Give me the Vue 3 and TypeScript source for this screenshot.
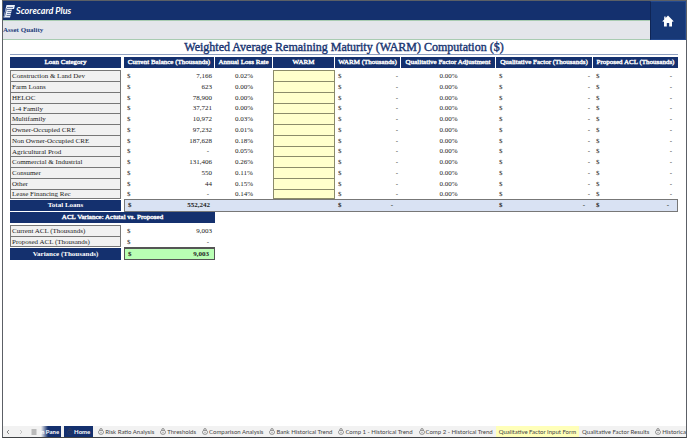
<script setup lang="ts">
import { ref } from 'vue'

interface LoanRow {
  category: string
  balance: string
  lossRate: string
}

interface SheetTab {
  label: string
  locked: boolean
  kind?: 'active' | 'input' | 'pane'
}

const headings: string[] = [
  'Current Balance (Thousands)',
  'Annual Loss Rate',
  'WARM',
  'WARM (Thousands)',
  'Qualitative Factor Adjustment',
  'Qualitative Factor (Thousands)',
  'Proposed ACL (Thousands)',
]

const loans: LoanRow[] = [
  { category: 'Construction & Land Dev', balance: '7,166', lossRate: '0.02%' },
  { category: 'Farm Loans', balance: '623', lossRate: '0.00%' },
  { category: 'HELOC', balance: '78,900', lossRate: '0.00%' },
  { category: '1-4 Family', balance: '37,721', lossRate: '0.00%' },
  { category: 'Multifamily', balance: '10,972', lossRate: '0.03%' },
  { category: 'Owner-Occupied CRE', balance: '97,232', lossRate: '0.01%' },
  { category: 'Non Owner-Occupied CRE', balance: '187,628', lossRate: '0.18%' },
  { category: 'Agricultural Prod', balance: '-', lossRate: '0.05%' },
  { category: 'Commercial & Industrial', balance: '131,406', lossRate: '0.26%' },
  { category: 'Consumer', balance: '550', lossRate: '0.11%' },
  { category: 'Other', balance: '44', lossRate: '0.15%' },
  { category: 'Lease Financing Rec', balance: '-', lossRate: '0.14%' },
]

const warm = ref<string[]>(loans.map(() => ''))

const tabs: SheetTab[] = [
  { label: 'n Pane', locked: false, kind: 'pane' },
  { label: 'Home', locked: true, kind: 'active' },
  { label: 'Risk Ratio Analysis', locked: true },
  { label: 'Thresholds', locked: true },
  { label: 'Comparison Analysis', locked: true },
  { label: 'Bank Historical Trend', locked: true },
  { label: 'Comp 1 - Historical Trend', locked: true },
  { label: 'Comp 2 - Historical Trend', locked: true },
  { label: 'Qualitative Factor Input Form', locked: false, kind: 'input' },
  { label: 'Qualitative Factor Results', locked: false },
  { label: 'Historical', locked: true },
]
</script>

<template>
  <div class="window">
    <header class="top">
      <div class="bars">
        <div class="brand">
          <svg class="mark" viewBox="0 0 24 28" aria-hidden="true">
            <path d="M7 2H24L22 10H18L14 27H1Z" fill="#e9eef8" />
            <path d="M8 7H20M8 11H18M9 15H17M8 19H16M7 23H15" stroke="#14306e" stroke-width="1.2" />
            <path d="M7 9L3 25" stroke="#14306e" stroke-width="1.4" />
          </svg>
          <span class="name">Scorecard Plus</span>
        </div>
        <div class="section">Asset Quality</div>
      </div>
      <a class="home" href="#home" aria-label="Home">
        <svg viewBox="0 0 12 12" aria-hidden="true">
          <path d="M6 .6L11.6 6.2L10.8 7L10 6.3V11.4H7.2V8H4.8V11.4H2V6.3L1.2 7L.4 6.2L2.2 4.4V1.6H3.6V3Z" fill="#fff" />
        </svg>
      </a>
    </header>

    <main class="sheet">
      <h1>Weighted Average Remaining Maturity (WARM) Computation ($)</h1>

      <table class="grid loans">
        <colgroup>
          <col class="c-cat" /><col class="c-gap" /><col class="c-bal" /><col class="c-rate" /><col class="c-warm" />
          <col class="c-wth" /><col class="c-qfa" /><col class="c-qf" /><col class="c-acl" />
        </colgroup>
        <thead>
          <tr>
            <th scope="col">Loan Category</th>
            <td></td>
            <th v-for="h in headings" :key="h" scope="col">{{ h }}</th>
          </tr>
        </thead>
        <tbody>
          <tr v-for="(loan, i) in loans" :key="loan.category">
            <th class="cat" scope="row">{{ loan.category }}</th>
            <td></td>
            <td><div class="money"><span>$</span><span :class="{ dash: loan.balance === '-' }">{{ loan.balance }}</span></div></td>
            <td class="mid">{{ loan.lossRate }}</td>
            <td class="entry"><input v-model="warm[i]" type="text" :aria-label="'WARM for ' + loan.category" /></td>
            <td><div class="money"><span>$</span><span>-</span></div></td>
            <td class="mid">0.00%</td>
            <td><div class="money"><span>$</span><span>-</span></div></td>
            <td><div class="money"><span>$</span><span class="dash">-</span></div></td>
          </tr>
        </tbody>
        <tfoot>
          <tr>
            <th scope="row">Total Loans</th>
            <td class="gap"></td>
            <td class="first"><div class="money"><span>$</span><span>552,242</span></div></td>
            <td></td>
            <td></td>
            <td><div class="money"><span>$</span><span class="dash">-</span></div></td>
            <td></td>
            <td><div class="money"><span>$</span><span class="dash">-</span></div></td>
            <td class="last"><div class="money"><span>$</span><span class="dash">-</span></div></td>
          </tr>
        </tfoot>
      </table>

      <table class="grid variance">
        <colgroup><col class="c-cat" /><col class="c-gap" /><col class="c-bal" /></colgroup>
        <thead>
          <tr><th colspan="3" scope="colgroup">ACL Variance: Actutal vs. Proposed</th></tr>
        </thead>
        <tbody>
          <tr>
            <th class="cat" scope="row">Current ACL (Thousands)</th>
            <td></td>
            <td><div class="money"><span>$</span><span>9,003</span></div></td>
          </tr>
          <tr>
            <th class="cat" scope="row">Proposed ACL (Thousands)</th>
            <td></td>
            <td><div class="money"><span>$</span><span class="dash">-</span></div></td>
          </tr>
        </tbody>
        <tfoot>
          <tr>
            <th scope="row">Variance (Thousands)</th>
            <td class="gap"></td>
            <td class="result"><div class="money"><span>$</span><span>9,003</span></div></td>
          </tr>
        </tfoot>
      </table>
    </main>

    <nav class="tabs" aria-label="Sheets">
      <div class="scroll">
        <button type="button" aria-label="Previous sheets"><svg viewBox="0 0 6 6"><path d="M4 1L2 3L4 5" /></svg></button>
        <button type="button" class="faint" aria-label="Next sheets"><svg viewBox="0 0 6 6"><path d="M2 1L4 3L2 5" /></svg></button>
        <button type="button" aria-label="All sheets"><svg viewBox="0 0 6 6"><path d="M.5 1H5.5M.5 3H5.5M.5 5H5.5" /></svg></button>
      </div>
      <button v-for="tab in tabs" :key="tab.label" type="button" class="tab" :class="tab.kind">
        <svg v-if="tab.locked" class="lock" viewBox="0 0 12 14" aria-hidden="true">
          <path d="M3.6 5V3.4A2.4 2.4 0 0 1 8.4 3.4V5" />
          <path d="M3 4.8H9Q11 6 11 8.5Q11 12.8 6 12.8Q1 12.8 1 8.5Q1 6 3 4.8Z" />
          <path d="M6 7.6V10" />
        </svg>
        <span>{{ tab.label }}</span>
      </button>
    </nav>
  </div>
</template>

<style>
body {
  margin: 0;
  background: #fff;
}
</style>

<style scoped>
.window {
  box-sizing: border-box;
  display: flex;
  flex-direction: column;
  height: calc(100vh - 2px);
  margin: 0 1px 2px 2px;
  border: 1px solid #5c6066;
  border-bottom-color: #3f4144;
  overflow: hidden;
  color: #222;
  font-family: 'Liberation Serif', 'Times New Roman', serif;
  font-size: 7px;
  line-height: 9px;
}

.top {
  display: flex;
  flex: none;
}

.bars {
  flex: 1;
}

.brand {
  display: flex;
  align-items: center;
  gap: 1px;
  height: 19px;
  box-sizing: border-box;
  background: #14306e;
  color: #fff;
}

.mark {
  width: 12px;
  height: 14px;
}

.name {
  font: italic bold 9px/14px Lato, 'Liberation Sans', sans-serif;
}

.section {
  box-sizing: border-box;
  height: 20px;
  border-top: 1px solid #a9ccb2;
  border-bottom: 1px solid #a9ccb2;
  background: #e4e6eb;
  color: #1d3c7c;
  font-weight: bold;
  line-height: 19px;
}

.home {
  display: flex;
  align-items: center;
  justify-content: center;
  width: 36px;
  box-sizing: border-box;
  border: 1px solid #24498e;
  border-left-color: #0f2555;
  background: #173876;
}

.home svg {
  width: 12px;
  height: 12px;
}

.sheet {
  flex: 1;
  padding: 1px 8px 0 7px;
}

h1 {
  margin: 0 0 2px;
  border-bottom: 1px solid #8e9fc0;
  color: #1a3672;
  font-size: 12px;
  font-weight: normal;
  line-height: 13px;
  text-align: center;
  white-space: nowrap;
  -webkit-text-stroke: 0.4px;
}

.grid {
  border-collapse: separate;
  border-spacing: 0;
  table-layout: fixed;
}

.loans {
  width: 100%;
}

/* Spans the category, gap and balance columns of the loan table. */
.variance {
  width: calc(100% * 205 / 668);
}

.c-cat { width: 111px; }
.c-gap { width: 3px; }
.c-bal { width: 91px; }
.c-rate { width: 58px; }
.c-warm { width: 62px; }
.c-wth { width: 66px; }
.c-qfa { width: 95px; }
.c-qf { width: 97px; }
.c-acl { width: 85px; }

th,
td {
  box-sizing: border-box;
  height: 11px;
  padding: 0;
  overflow: hidden;
  white-space: nowrap;
}

thead th,
tfoot th {
  background: #14306e;
  color: #fff;
  text-align: center;
}

thead th {
  height: 13px;
  border-right: 1px solid #fff;
  border-bottom: 2px solid #fff;
  font-weight: normal;
  -webkit-text-stroke: 0.4px;
}

thead th:first-child,
thead th:last-child {
  border-right: 0;
}

tbody tr:nth-child(4n) > * {
  height: 10px;
}

tbody td,
.cat {
  line-height: 8px;
}

.cat {
  padding-left: 1px;
  border: 1px solid #777;
  border-bottom: 0;
  background: #f1f1f1;
  font-weight: normal;
  text-align: left;
}

tbody tr:last-child .cat {
  border-bottom: 1px solid #777;
}

.mid {
  text-align: center;
}

.money {
  display: flex;
  justify-content: space-between;
  padding: 0 3px;
}

.dash {
  padding-right: 3px;
}

.entry {
  border: 1px solid #8b8b6a;
  border-bottom: 0;
  background: #ffffcc;
}

tbody tr:last-child .entry {
  border-bottom: 1px solid #8b8b6a;
}

.entry input {
  display: block;
  box-sizing: border-box;
  width: 100%;
  height: 8px;
  padding: 0 2px;
  border: 0;
  outline: 0;
  background: transparent;
  font: inherit;
  text-align: center;
}

tfoot th,
tfoot td {
  height: 13px;
  border-top: 1px solid #fff;
  font-weight: bold;
}

.loans tfoot th {
  border-bottom: 1px solid #fff;
}

.loans tfoot td {
  border-top: 1px solid #777;
  border-bottom: 1px solid #777;
  background: #d9e2f3;
}

.loans tfoot .gap,
.variance tfoot .gap {
  border-color: #fff;
  background: #fff;
}

.loans tfoot .first {
  border-left: 1px solid #777;
}

.loans tfoot .last {
  border-right: 1px solid #777;
}

.variance tfoot .result {
  border: 1px solid #555;
  border-top-width: 2px;
  background: #b9ffb4;
}

tfoot .money {
  padding-right: 5px;
}

.tabs {
  display: flex;
  flex: none;
  align-items: stretch;
  height: 11px;
  overflow: hidden;
  background: #f2f2f2;
  font-family: Lato, 'Open Sans', sans-serif;
}

.tabs button {
  flex: none;
  margin: 0;
  padding: 0;
  border: 0;
  background: transparent;
  color: #444;
  font: inherit;
  font-size: 6px;
  line-height: 10px;
}

.scroll {
  display: flex;
  flex: none;
  align-items: center;
  gap: 7px;
  padding: 0 4px 0 2px;
}

.scroll svg {
  display: block;
  width: 6px;
  height: 6px;
  fill: none;
  stroke: #666;
  stroke-width: 0.8;
}

.scroll .faint {
  opacity: 0.4;
}

.tabs .tab {
  display: flex;
  align-items: center;
  gap: 1px;
  padding: 0 3px;
  white-space: nowrap;
}

.lock {
  width: 6px;
  height: 7px;
  fill: none;
  stroke: #555;
  stroke-width: 1.2;
}

.tabs .pane,
.tabs .active {
  background: #14306e;
  color: #fff;
  font-weight: bold;
}

.tabs .pane {
  margin-right: 3px;
  padding: 0 2px 0 0;
  background: linear-gradient(90deg, #f2f2f2, #14306e 7px);
}

.tabs .active {
  margin-right: 2px;
}

.active .lock {
  stroke: #3b3f55;
}

.tabs .input {
  background: #ffffb9;
}
</style>
